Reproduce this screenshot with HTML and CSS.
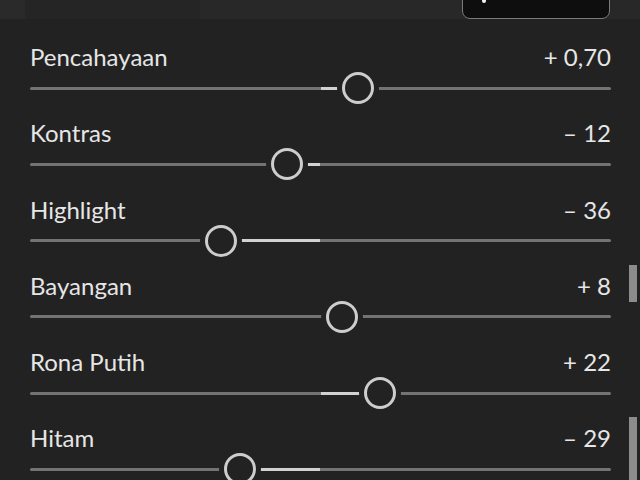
FILE: index.html
```html
<!DOCTYPE html>
<html lang="id">
<head>
<meta charset="utf-8">
<link rel="stylesheet" href="styles.css">
</head>
<body>
<div class="topbar">
  <div class="seg seg-a"></div>
  <div class="seg seg-b"></div>
  <div class="seg seg-c"></div>
  <div class="topbtn"><span class="dot"></span></div>
</div>
<div class="panel">
  <div class="row">
    <div class="head"><span>Pencahayaan</span><span>+ 0,70</span></div>
    <div class="slider"><div class="track"></div><div class="fill" style="left:50%;width:6.5%"></div><div class="thumb" style="left:56.5%"></div></div>
  </div>
  <div class="row">
    <div class="head"><span>Kontras</span><span>– 12</span></div>
    <div class="slider"><div class="track"></div><div class="fill" style="left:44.2%;width:5.8%"></div><div class="thumb" style="left:44.2%"></div></div>
  </div>
  <div class="row">
    <div class="head"><span>Highlight</span><span>– 36</span></div>
    <div class="slider"><div class="track"></div><div class="fill" style="left:32.9%;width:17.1%"></div><div class="thumb" style="left:32.9%"></div></div>
  </div>
  <div class="row">
    <div class="head"><span>Bayangan</span><span>+ 8</span></div>
    <div class="slider"><div class="track"></div><div class="fill" style="left:50%;width:3.7%"></div><div class="thumb" style="left:53.7%"></div></div>
  </div>
  <div class="row">
    <div class="head"><span>Rona Putih</span><span>+ 22</span></div>
    <div class="slider"><div class="track"></div><div class="fill" style="left:50%;width:10.2%"></div><div class="thumb" style="left:60.2%"></div></div>
  </div>
  <div class="row">
    <div class="head"><span>Hitam</span><span>– 29</span></div>
    <div class="slider"><div class="track"></div><div class="fill" style="left:36.1%;width:13.9%"></div><div class="thumb" style="left:36.1%"></div></div>
  </div>
  <div class="scroll scroll-a"></div>
  <div class="scroll scroll-b"></div>
</div>
</body>
</html>
```

FILE: styles.css
```css
html, body {
  margin: 0;
  padding: 0;
  background: #222222;
  width: 640px;
  height: 480px;
  overflow: hidden;
  font-family: "Lato", "Liberation Sans", sans-serif;
  color: #e6e6e6;
}

.topbar {
  position: relative;
  height: 19px;
  display: flex;
  background: #282828;
}
.seg { height: 100%; }
.seg-a { width: 25px; background: #2a2a2a; }
.seg-b { width: 175px; background: #242524; }
.seg-c { flex: 1; background: #282828; }

.topbtn {
  position: absolute;
  left: 462px;
  top: -10px;
  width: 146px;
  height: 27px;
  background: #0e0e0e;
  border: 1.5px solid #7a7a7a;
  border-radius: 0 0 8px 8px;
}
.dot {
  position: absolute;
  left: 19px;
  top: 9px;
  width: 4px;
  height: 3px;
  background: #f0f0f0;
  border-radius: 0 0 2px 2px;
}

.panel {
  position: relative;
  padding: 21px 29px 0 30px;
}

.row {
  height: 76.3px;
}

.head {
  height: 34px;
  display: flex;
  justify-content: space-between;
  align-items: center;
  font-size: 24px;
  line-height: 34px;
}

.slider {
  position: relative;
  height: 28px;
  display: flex;
  align-items: center;
}
.track {
  width: 100%;
  height: 3px;
  border-radius: 2px;
  background: #737373;
}
.fill {
  position: absolute;
  top: 12.5px;
  height: 3px;
  background: #d2d2d2;
}
.thumb {
  position: absolute;
  top: -2px;
  width: 26px;
  height: 26px;
  margin-left: -16px;
  border: 3px solid #cdcdcd;
  border-radius: 50%;
  background: #222222;
  box-shadow: 0 0 0 5px #222222;
}

.scroll {
  position: absolute;
  left: 629px;
  width: 8px;
  background: #8c8c8c;
}
.scroll-a { top: 246px; height: 37px; }
.scroll-b { top: 398px; height: 70px; }
```
